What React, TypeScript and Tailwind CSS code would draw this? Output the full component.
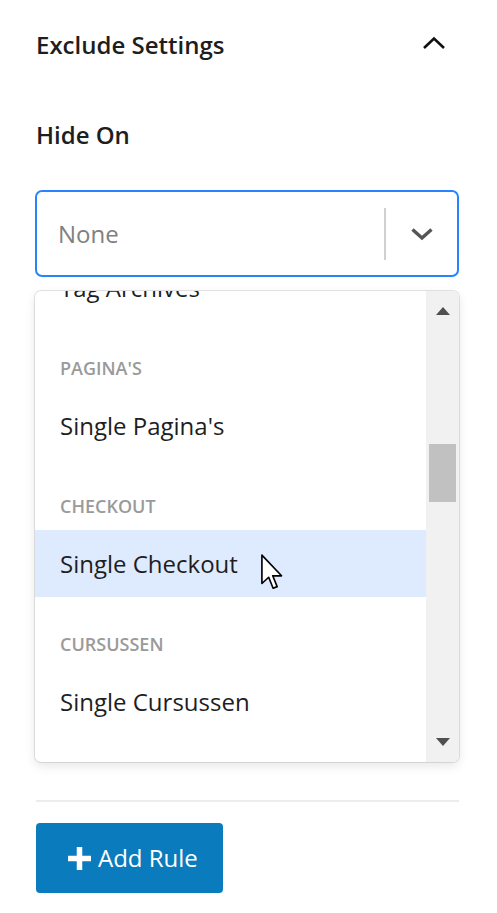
import React from "react";

type Row = { type: "group" | "item"; label: string; active?: boolean; last?: boolean };

const rows: Row[] = [
  { type: "item", label: "Tag Archives" },
  { type: "group", label: "PAGINA'S" },
  { type: "item", label: "Single Pagina's" },
  { type: "group", label: "CHECKOUT" },
  { type: "item", label: "Single Checkout", active: true },
  { type: "group", label: "CURSUSSEN" },
  { type: "item", label: "Single Cursussen" },
  { type: "item", label: "Cursussen Archief", last: true },
];

function Cursor() {
  return (
    <svg width="22" height="37" viewBox="0 0 12 20" className="absolute left-[226px] top-[24px]">
      <path
        d="M0.5 0.5 L0.5 16 L4.2 12.6 L6.6 18.6 L8.8 17.7 L6.4 11.8 L11.2 11.8 Z"
        fill="#fff"
        stroke="#000"
        strokeWidth="0.9"
        strokeLinejoin="round"
      />
    </svg>
  );
}

function Scrollbar() {
  return (
    <div className="flex w-[33px] flex-col items-center bg-[#f1f1f1]">
      <svg width="14" height="8" viewBox="0 0 14 8" className="mt-[16px]">
        <path d="M0 8 L7 0 L14 8 Z" fill="#505050" />
      </svg>
      <div className="mt-[129px] h-[58px] w-[27px] bg-[#c1c1c1]" />
      <div className="flex-1" />
      <svg width="14" height="8" viewBox="0 0 14 8" className="mb-[16px]">
        <path d="M0 0 L7 8 L14 0 Z" fill="#505050" />
      </svg>
    </div>
  );
}

export default function App() {
  return (
    <div className="min-h-screen bg-white font-['Open_Sans',sans-serif] text-[#1e1e1e]">
      <div className="pl-[35px] pr-[38px] pt-[30px] pb-[20px]">
        {/* Section header */}
        <div className="flex h-[30px] items-center justify-between">
          <h2 className="pl-[1px] text-[24px] font-semibold leading-[30px]">Exclude Settings</h2>
          <svg width="24" height="14" viewBox="0 0 24 14" className="mr-[13px] -mt-[5px]">
            <path d="M2 12 L12 2.5 L22 12" fill="none" stroke="#111" strokeWidth="2.6" />
          </svg>
        </div>

        <div className="mt-[60px] pl-[1px] text-[24px] font-semibold leading-[30px]">Hide On</div>

        {/* Select */}
        <div className="mt-[40px] flex h-[87px] items-center rounded-[7px] border-2 border-[#2684ff]">
          <span className="flex-1 pl-[21px] text-[24px] text-[#808080]">None</span>
          <span className="h-[52px] w-[2px] bg-[#d0d0d0]" />
          <span className="flex w-[71px] justify-center">
            <svg width="24" height="14" viewBox="0 0 24 14">
              <path d="M2.5 2.5 L12 11 L21.5 2.5" fill="none" stroke="#555" strokeWidth="3.4" />
            </svg>
          </span>
        </div>

        {/* Menu */}
        <div className="mt-[14px] flex h-[471px] overflow-hidden rounded-[6px] bg-white shadow-[0_0_0_1px_rgba(0,0,0,0.1),0_4px_11px_rgba(0,0,0,0.1)]">
          <div className="flex-1 overflow-hidden">
            <div className="-mt-[37px]">
              {rows.map((r) =>
                r.type === "group" ? (
                  <div
                    key={r.label}
                    className="pl-[25px] pt-[38px] pb-[14px] text-[18px] font-semibold leading-[19px] text-[#9a9a9a]"
                  >
                    {r.label}
                  </div>
                ) : (
                  <div
                    key={r.label}
                    className={`relative flex h-[67px] items-center pl-[25px] text-[24px] ${
                      r.active ? "bg-[#deebff]" : ""
                    } ${r.last ? "pt-[10px]" : ""}`}
                  >
                    {r.label}
                    {r.active && <Cursor />}
                  </div>
                )
              )}
            </div>
          </div>
          <Scrollbar />
        </div>

        <div className="mt-[38px] ml-[1px] h-[2px] bg-[#ececec]" />

        <button className="mt-[21px] ml-[1px] flex h-[70px] w-[187px] items-center gap-[6px] rounded-[4px] bg-[#0a7bbc] pl-[31px] text-[24px] text-white">
          <svg width="25" height="25" viewBox="0 0 25 25">
            <path d="M12.5 1 V24 M1 12.5 H24" stroke="#fff" strokeWidth="5.5" />
          </svg>
          <span>Add Rule</span>
        </button>
      </div>
    </div>
  );
}
